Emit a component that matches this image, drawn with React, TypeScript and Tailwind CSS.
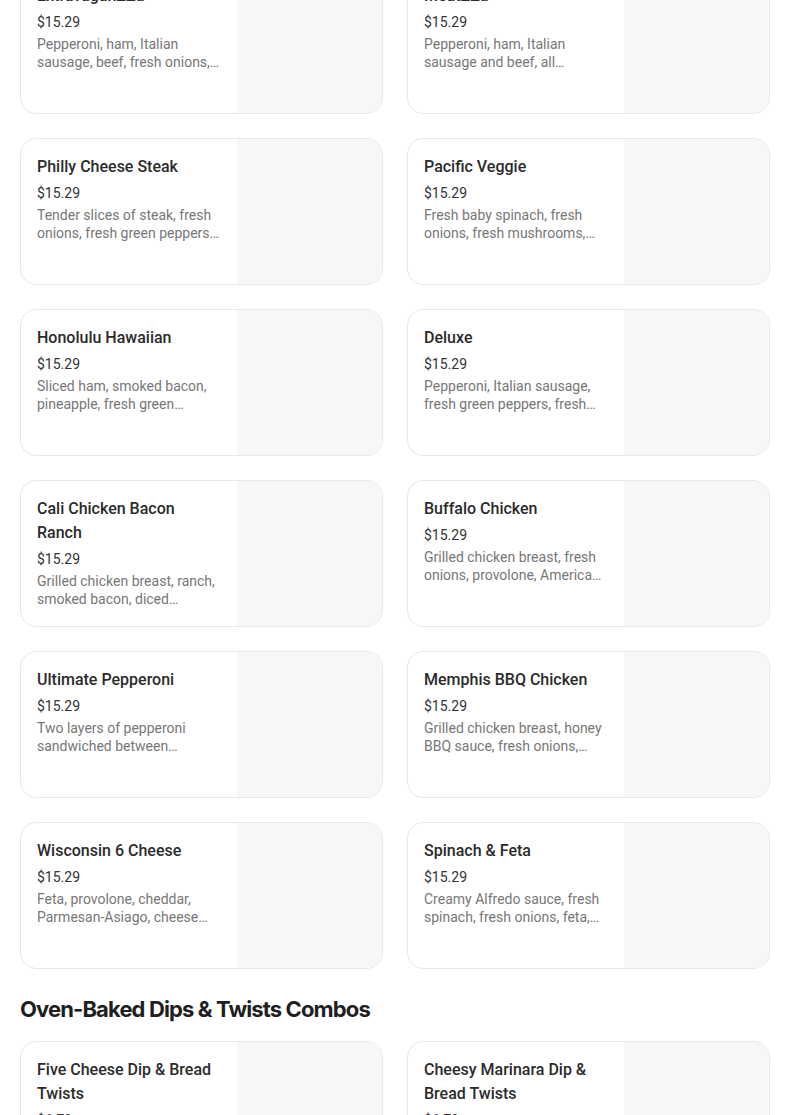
const pizzas = [
  { name: "ExtravaganZZa", price: "$15.29", desc: "Pepperoni, ham, Italian sausage, beef, fresh onions, fresh green peppers, fresh mushrooms and black olives" },
  { name: "MeatZZa", price: "$15.29", desc: "Pepperoni, ham, Italian sausage and beef, all sandwiched between cheese" },
  { name: "Philly Cheese Steak", price: "$15.29", desc: "Tender slices of steak, fresh onions, fresh green peppers, fresh mushrooms, provolone and American cheese" },
  { name: "Pacific Veggie", price: "$15.29", desc: "Fresh baby spinach, fresh onions, fresh mushrooms, tomatoes, black olives, feta, provolone" },
  { name: "Honolulu Hawaiian", price: "$15.29", desc: "Sliced ham, smoked bacon, pineapple, fresh green peppers, provolone and cheese" },
  { name: "Deluxe", price: "$15.29", desc: "Pepperoni, Italian sausage, fresh green peppers, fresh mushrooms and fresh onions" },
  { name: "Cali Chicken Bacon Ranch", price: "$15.29", desc: "Grilled chicken breast, ranch, smoked bacon, diced tomatoes, provolone and cheese" },
  { name: "Buffalo Chicken", price: "$15.29", desc: "Grilled chicken breast, fresh onions, provolone, American cheese, cheddar, buffalo sauce" },
  { name: "Ultimate Pepperoni", price: "$15.29", desc: "Two layers of pepperoni sandwiched between provolone and Parmesan-Asiago cheese" },
  { name: "Memphis BBQ Chicken", price: "$15.29", desc: "Grilled chicken breast, honey BBQ sauce, fresh onions, provolone and cheddar" },
  { name: "Wisconsin 6 Cheese", price: "$15.29", desc: "Feta, provolone, cheddar, Parmesan-Asiago, cheese and oregano" },
  { name: "Spinach & Feta", price: "$15.29", desc: "Creamy Alfredo sauce, fresh spinach, fresh onions, feta, Parmesan-Asiago and provolone" },
];

const combos = [
  { name: "Five Cheese Dip & Bread Twists", price: "$6.79", desc: "Oven-baked five cheese dip with bread twists" },
  { name: "Cheesy Marinara Dip & Bread Twists", price: "$6.79", desc: "Oven-baked cheesy marinara dip with bread twists" },
];

function ItemCard({ item }: { item: { name: string; price: string; desc: string } }) {
  return (
    <div className="flex h-[147px] overflow-hidden rounded-2xl border border-[#e8e8e8] bg-white">
      <div className="w-[216px] shrink-0 px-4 pt-4">
        <div className="text-[16px] font-medium leading-6 text-[#2b2b2b]">{item.name}</div>
        <div className="mt-1 text-[14px] leading-5 text-[#333333]">{item.price}</div>
        <div className="mt-[3px] line-clamp-2 text-[14px] leading-[18px] text-[#777777]">{item.desc}</div>
      </div>
      <div className="flex-1 bg-[#f7f7f7]" />
    </div>
  );
}

export default function App() {
  return (
    <div className="min-h-screen overflow-hidden bg-white" style={{ fontFamily: "Roboto, 'Noto Sans', sans-serif" }}>
      <div className="ml-[20px] -mt-[33px] w-[750px]">
        <div className="grid grid-cols-2 gap-6">
          {pizzas.map((p) => (
            <ItemCard key={p.name} item={p} />
          ))}
        </div>

        <h2
          className="mt-[24px] mb-[16px] text-[22px] font-bold leading-8 tracking-[-0.04em] text-[#1f1f1f]"
          style={{ fontFamily: "Inter, sans-serif" }}
        >
          Oven-Baked Dips &amp; Twists Combos
        </h2>

        <div className="grid grid-cols-2 gap-6">
          {combos.map((p) => (
            <ItemCard key={p.name} item={p} />
          ))}
        </div>
      </div>
    </div>
  );
}
